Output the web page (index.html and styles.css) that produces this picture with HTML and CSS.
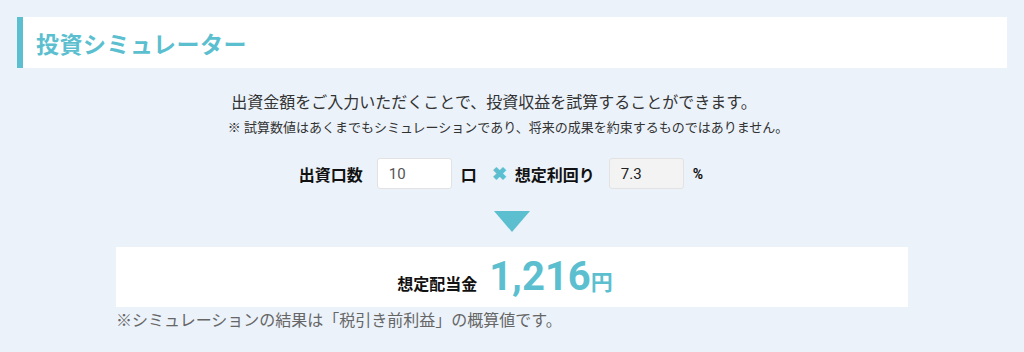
FILE: index.html
```html
<!DOCTYPE html>
<html lang="ja">
<head>
    <meta charset="UTF-8">
    <meta name="viewport" content="width=device-width, initial-scale=1.0">
    <title>投資シミュレーター</title>
    <link rel="stylesheet" href="styles.css">
</head>
<body>

    <!-- Title -->
    <div class="sim-header">
        <h2>投資シミュレーター</h2>
    </div>

    <!-- Intro -->
    <div class="sim-intro">
        <p class="lead">出資金額をご入力いただくことで、投資収益を試算することができます。</p>
        <p class="note">※ 試算数値はあくまでもシミュレーションであり、将来の成果を約束するものではありません。</p>
    </div>

    <!-- Inputs -->
    <div class="sim-form">
        <label for="units">出資口数</label>
        <input type="text" id="units" value="10">
        <span class="unit">口</span>
        <span class="times">&#x2716;</span>
        <label for="rate">想定利回り</label>
        <input type="text" id="rate" value="7.3" readonly class="readonly">
        <span class="unit small">%</span>
    </div>

    <div class="arrow"></div>

    <!-- Result -->
    <div class="sim-result">
        <span class="result-label">想定配当金</span>
        <span class="result-value">1,216</span><span class="result-yen">円</span>
    </div>
    <p class="sim-foot">※シミュレーションの結果は「税引き前利益」の概算値です。</p>

</body>
</html>
```

FILE: styles.css
```css
* {
    margin: 0;
    padding: 0;
    box-sizing: border-box;
}

body {
    font-family: Roboto, "Noto Sans CJK JP", sans-serif;
    background: #ebf2fa;
    color: #333;
}

/* Title */
.sim-header {
    margin: 17px 17px 0;
    height: 51px;
    background: #fff;
    border-left: 6px solid #5bbfd0;
    display: flex;
    align-items: center;
    padding-left: 13px;
}

.sim-header h2 {
    font-size: 23px;
    font-weight: bold;
    color: #5bbfd0;
    letter-spacing: 0.5px;
}

/* Intro */
.sim-intro {
    text-align: center;
    margin-top: 22px;
}

.sim-intro .lead {
    font-size: 16px;
    line-height: 26px;
    color: #333;
    padding-right: 36px;
}

.sim-intro .note {
    font-size: 13px;
    line-height: 24px;
    color: #333;
    padding-right: 8px;
}

/* Inputs */
.sim-form {
    display: flex;
    justify-content: center;
    align-items: center;
    margin-top: 18px;
    padding-right: 22px;
    font-weight: bold;
    font-size: 16px;
    color: #111;
}

.sim-form label {
    margin-right: 14px;
}

.sim-form input {
    width: 75px;
    height: 31px;
    border: 1px solid #e2e2e2;
    border-radius: 3px;
    background: #fff;
    font-family: Roboto, sans-serif;
    font-size: 15px;
    color: #555;
    padding: 0 11px;
    margin-right: 9px;
}

.sim-form input.readonly {
    background: #f3f3f3;
    color: #222;
}

.sim-form .unit {
    margin-right: 15px;
}

.sim-form .unit.small {
    font-size: 14px;
    margin-right: 0;
}

.sim-form .times {
    color: #5bbfd0;
    font-size: 18px;
    margin-right: 8px;
}

/* Arrow */
.arrow {
    width: 0;
    height: 0;
    margin: 22px auto 0;
    border-left: 18px solid transparent;
    border-right: 18px solid transparent;
    border-top: 21px solid #5bbfd0;
}

/* Result */
.sim-result {
    width: 792px;
    height: 60px;
    margin: 15px auto 0;
    background: #fff;
    display: flex;
    justify-content: center;
    align-items: baseline;
    padding-top: 8px;
    padding-right: 14px;
}

.result-label {
    font-size: 16px;
    font-weight: bold;
    color: #111;
    margin-right: 12px;
}

.result-value {
    font-size: 40px;
    font-weight: bold;
    color: #5bbfd0;
    line-height: 44px;
}

.result-yen {
    font-size: 22px;
    font-weight: bold;
    color: #5bbfd0;
}

.sim-foot {
    width: 792px;
    margin: 1px auto 0;
    font-size: 16px;
    color: #666;
    line-height: 26px;
}
```
